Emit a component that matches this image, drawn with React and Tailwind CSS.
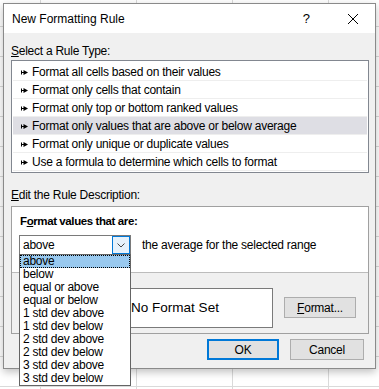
import React from "react";

const ruleTypes = [
  "Format all cells based on their values",
  "Format only cells that contain",
  "Format only top or bottom ranked values",
  "Format only values that are above or below average",
  "Format only unique or duplicate values",
  "Use a formula to determine which cells to format",
];

const options = [
  "above",
  "below",
  "equal or above",
  "equal or below",
  "1 std dev above",
  "1 std dev below",
  "2 std dev above",
  "2 std dev below",
  "3 std dev above",
  "3 std dev below",
];

const Bullet = () => (
  <svg width="7" height="5" viewBox="0 0 7 5" className="shrink-0">
    <path d="M0.5 0.5v4M0.5 2.5h3" stroke="#000" strokeWidth="1" />
    <path d="M2.5 0L7 2.5L2.5 5Z" fill="#000" />
  </svg>
);

export default function App() {
  return (
    <div className="relative w-[379px] h-[389px] overflow-hidden bg-white bg-[linear-gradient(to_right,#dadada_1px,transparent_1px),linear-gradient(to_bottom,#dadada_1px,transparent_1px)] bg-[size:96px_30px] bg-[position:40px_26px] font-['Liberation_Sans',Arial,sans-serif] text-[12px] text-black">
      <div className="absolute left-[3px] top-[3px] w-[373px] h-[366px] border border-[#8a8a8a] bg-[#f0f0f0] shadow-[0_3px_8px_rgba(0,0,0,0.25)] flex flex-col">
        {/* title bar */}
        <div className="h-[29px] shrink-0 bg-white flex items-center pl-[8px]">
          <span>New Formatting Rule</span>
          <span className="ml-auto text-[13px]">?</span>
          <svg width="10" height="10" viewBox="0 0 10 10" className="ml-[38px] mr-[17px]">
            <path d="M0 0L10 10M10 0L0 10" stroke="#000" strokeWidth="1" />
          </svg>
        </div>

        <div className="flex-1 flex flex-col pl-[7px] pr-[6px] pt-[11px] pb-[8px] tracking-[-0.25px]">
          <div className="h-[15px] leading-[15px]">
            <span className="underline underline-offset-[1px]">S</span>elect a Rule Type:
          </div>

          <div className="mt-[1px] border border-[#828790] bg-white pt-[2px] pb-[1px] px-[1px]">
            {ruleTypes.map((rule, i) => (
              <div
                key={rule}
                className={
                  "h-[18px] flex items-center gap-[4px] pl-[8px] pt-[1px] border-b border-[#eeeeee] " +
                  (i === 3 ? "bg-[#dedee4]" : "")
                }
              >
                <Bullet />
                <span className="leading-[15px]">{rule}</span>
              </div>
            ))}
          </div>

          <div className="mt-[15px] h-[15px] leading-[15px]">
            <span className="underline underline-offset-[1px]">E</span>dit the Rule Description:
          </div>

          <div className="mt-[3px] border border-[#a0a0a0]">
            <div className="bg-white border-b border-[#bcbcbc] pt-[7px] pl-[7px] pb-[17px]">
              <div className="ml-[1px] h-[15px] leading-[15px] font-bold text-[11.5px] tracking-[-0.4px]">
                F<span className="underline underline-offset-[1px]">o</span>rmat values that are:
              </div>
              <div className="mt-[6px] flex items-center">
                <div className="relative w-[112px] h-[20px] border border-[#7a7a7a] bg-white flex">
                  <span className="flex-1 flex items-center pl-[3px]">above</span>
                  <div className="w-[18px] border border-[#0078d7] bg-[#e5f1fb] flex items-center justify-center">
                    <svg width="8" height="5" viewBox="0 0 8 5">
                      <path d="M0.5 0.5L4 4L7.5 0.5" stroke="#444" strokeWidth="1" fill="none" />
                    </svg>
                  </div>

                  <div className="absolute left-[-1px] top-full w-[112px] border border-[#646464] bg-white z-10">
                    {options.map((opt, i) => (
                      <div
                        key={opt}
                        className={
                          "h-[13px] " +
                          (i === 0
                            ? "leading-[11px] bg-[#99c9ef] border border-dotted border-black pl-[2px]"
                            : "leading-[13px] pl-[3px]")
                        }
                      >
                        {opt}
                      </div>
                    ))}
                  </div>
                </div>
                <span className="ml-[11px]">the average for the selected range</span>
              </div>
            </div>

            <div className="h-[60px] flex items-start pt-[15px] pl-[65px]">
              <div className="w-[196px] h-[40px] border border-[#7a7a7a] bg-white flex items-center justify-center text-[13.5px] tracking-normal">
                No Format Set
              </div>
              <button className="ml-[11px] mt-[9px] w-[72px] h-[21px] border border-[#adadad] bg-[#e1e1e1] flex items-center justify-center">
                <span className="underline underline-offset-[1px]">F</span>ormat...
              </button>
            </div>
          </div>

          <div className="mt-[5px] flex justify-end gap-[11px] pr-[5px]">
            <button className="w-[72px] h-[21px] border-2 border-[#0078d7] bg-[#e1e1e1] flex items-center justify-center">
              OK
            </button>
            <button className="w-[74px] h-[21px] border border-[#adadad] bg-[#e1e1e1] flex items-center justify-center">
              Cancel
            </button>
          </div>
        </div>
      </div>
    </div>
  );
}
